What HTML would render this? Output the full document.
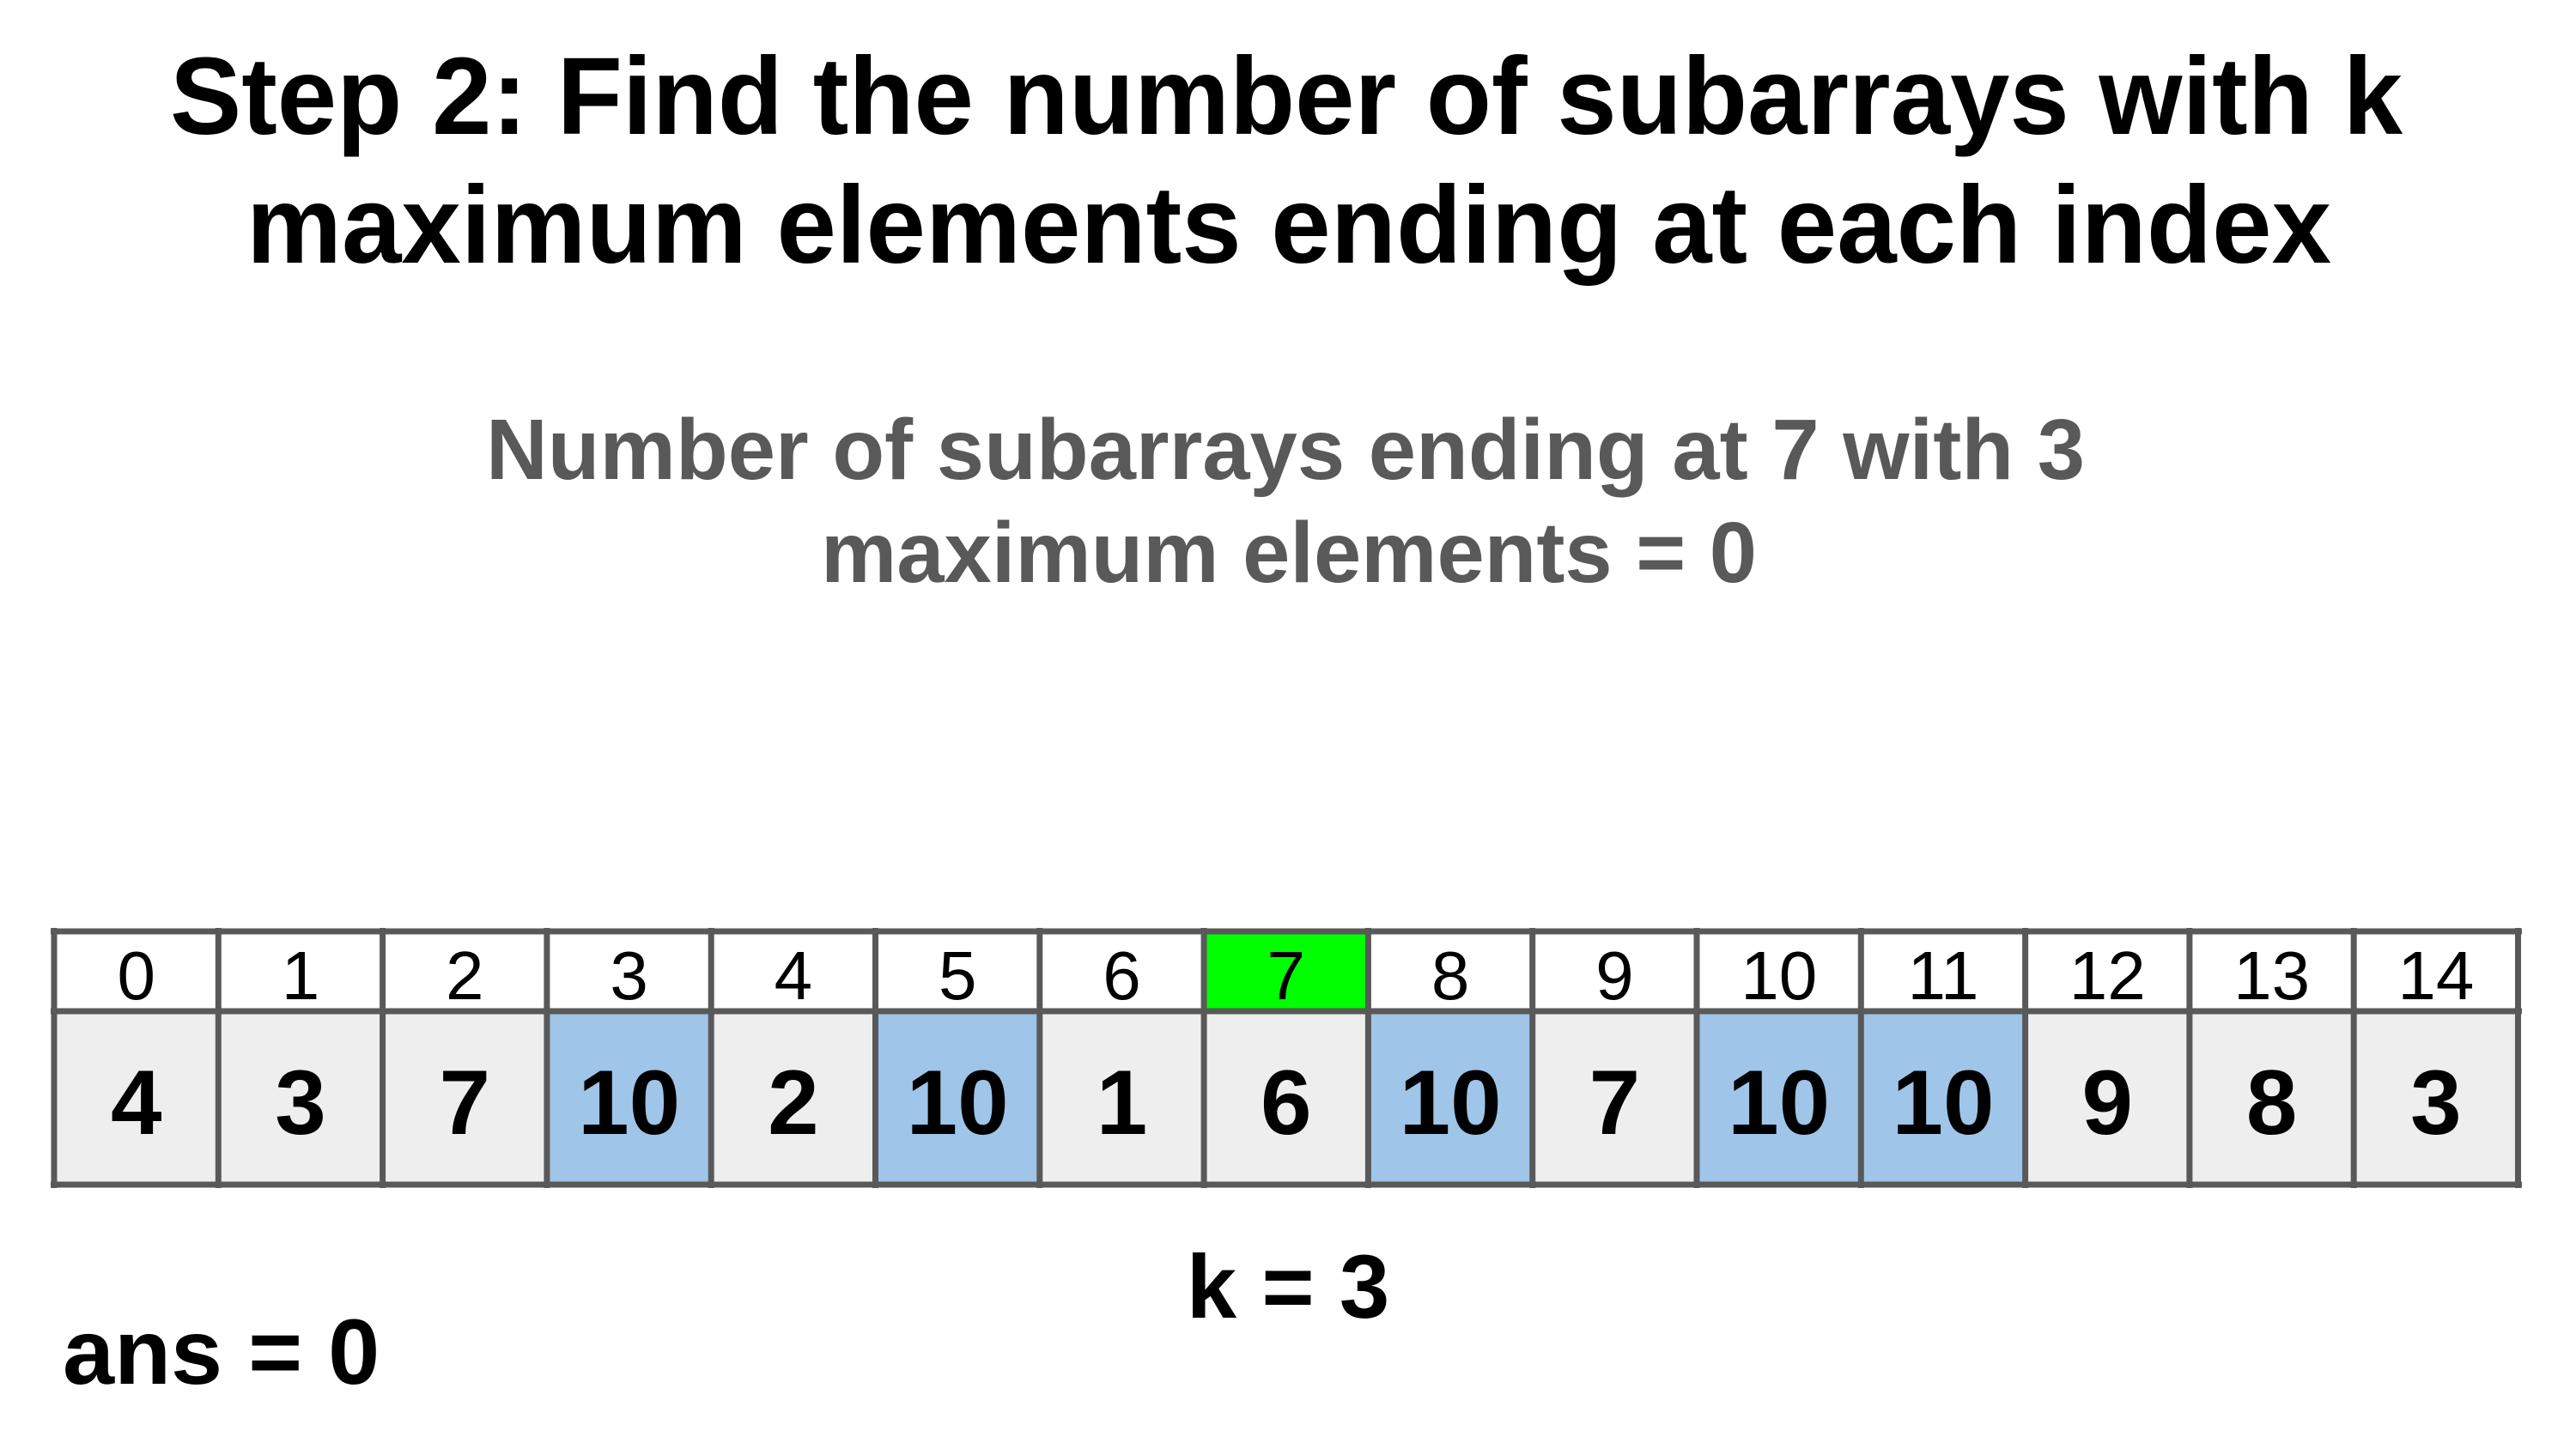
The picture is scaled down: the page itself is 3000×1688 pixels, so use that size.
<!DOCTYPE html>
<html><head><meta charset="utf-8"><style>html,body{margin:0;padding:0;background:#fff}svg{display:block}</style></head>
<body>
<svg width="3000" height="1688" viewBox="0 0 3000 1688" xmlns="http://www.w3.org/2000/svg" font-family="'Liberation Sans', Arial, sans-serif">
<rect width="3000" height="1688" fill="#fff"/>
<g font-weight="bold" fill="#000" font-size="128">
<text x="198" y="156" textLength="2600" lengthAdjust="spacingAndGlyphs">Step 2: Find the number of subarrays with k</text>
<text x="287" y="306" textLength="2428" lengthAdjust="spacingAndGlyphs">maximum elements ending at each index</text>
</g>
<g font-weight="bold" fill="#595959" font-size="100">
<text x="566" y="558" textLength="1862" lengthAdjust="spacingAndGlyphs">Number of subarrays ending at 7 with 3</text>
<text x="956" y="678" textLength="1090" lengthAdjust="spacingAndGlyphs">maximum elements = 0</text>
</g>
<g transform="translate(0,-5)">
<rect x="63" y="1090" width="2870" height="93" fill="#fff"/>
<rect x="1402" y="1090" width="191.3" height="93" fill="#00ff00"/>
<rect x="63" y="1183" width="2870" height="202" fill="#eeeeee"/>
<rect x="637" y="1183" width="191.3" height="202" fill="#9fc5e8"/>
<rect x="1019.5" y="1183" width="191.3" height="202" fill="#9fc5e8"/>
<rect x="1593.4" y="1183" width="191.3" height="202" fill="#9fc5e8"/>
<rect x="1976" y="1183" width="191.3" height="202" fill="#9fc5e8"/>
<rect x="2167.3" y="1183" width="191.3" height="202" fill="#9fc5e8"/>
<g stroke="#595959" stroke-width="7">
<line x1="59" y1="1090" x2="2937" y2="1090"/>
<line x1="59" y1="1183" x2="2937" y2="1183"/>
<line x1="59" y1="1385" x2="2937" y2="1385"/>
<line x1="63" y1="1086" x2="63" y2="1389"/>
<line x1="254.3" y1="1086" x2="254.3" y2="1389"/>
<line x1="445.6" y1="1086" x2="445.6" y2="1389"/>
<line x1="636.9" y1="1086" x2="636.9" y2="1389"/>
<line x1="828.2" y1="1086" x2="828.2" y2="1389"/>
<line x1="1019.5" y1="1086" x2="1019.5" y2="1389"/>
<line x1="1210.8" y1="1086" x2="1210.8" y2="1389"/>
<line x1="1402.1" y1="1086" x2="1402.1" y2="1389"/>
<line x1="1593.4" y1="1086" x2="1593.4" y2="1389"/>
<line x1="1784.7" y1="1086" x2="1784.7" y2="1389"/>
<line x1="1976" y1="1086" x2="1976" y2="1389"/>
<line x1="2167.3" y1="1086" x2="2167.3" y2="1389"/>
<line x1="2358.6" y1="1086" x2="2358.6" y2="1389"/>
<line x1="2549.9" y1="1086" x2="2549.9" y2="1389"/>
<line x1="2741.2" y1="1086" x2="2741.2" y2="1389"/>
<line x1="2932.5" y1="1086" x2="2932.5" y2="1389"/>
</g>
<g font-size="80" text-anchor="middle" fill="#000">
<text x="158.7" y="1169">0</text><text x="350" y="1169">1</text><text x="541.3" y="1169">2</text><text x="732.6" y="1169">3</text><text x="923.9" y="1169">4</text><text x="1115.2" y="1169">5</text><text x="1306.5" y="1169">6</text><text x="1497.8" y="1169">7</text><text x="1689.1" y="1169">8</text><text x="1880.4" y="1169">9</text><text x="2071.7" y="1169">10</text><text x="2263" y="1169">11</text><text x="2454.3" y="1169">12</text><text x="2645.6" y="1169">13</text><text x="2836.9" y="1169">14</text>
</g>
<g font-size="107" font-weight="bold" text-anchor="middle" fill="#000">
<text x="158.7" y="1326">4</text><text x="350" y="1326">3</text><text x="541.3" y="1326">7</text><text x="732.6" y="1326">10</text><text x="923.9" y="1326">2</text><text x="1115.2" y="1326">10</text><text x="1306.5" y="1326">1</text><text x="1497.8" y="1326">6</text><text x="1689.1" y="1326">10</text><text x="1880.4" y="1326">7</text><text x="2071.7" y="1326">10</text><text x="2263" y="1326">10</text><text x="2454.3" y="1326">9</text><text x="2645.6" y="1326">8</text><text x="2836.9" y="1326">3</text>
</g>
</g>
<g font-weight="bold" fill="#000">
<text x="1500" y="1535" text-anchor="middle" font-size="105">k = 3</text>
<text x="73" y="1612" font-size="108">ans = 0</text>
</g>
</svg>
</body></html>
